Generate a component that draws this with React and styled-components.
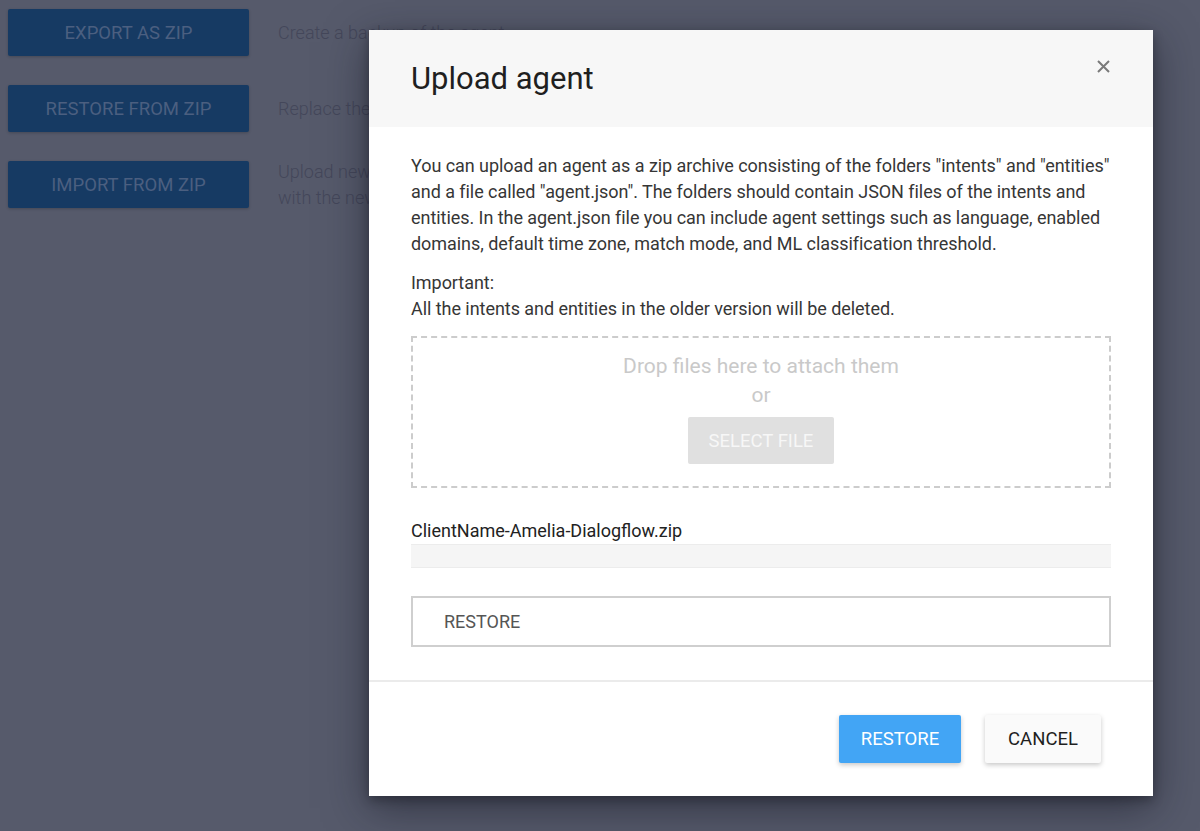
import React from "react";
import styled, { createGlobalStyle } from "styled-components";

const Global = createGlobalStyle`
  html, body { margin: 0; padding: 0; }
  body {
    background: #565a6b;
    font-family: Roboto, "Liberation Sans", sans-serif;
    width: 1200px;
    height: 831px;
    overflow: hidden;
  }
  * { box-sizing: border-box; }
`;

const Page = styled.div`
  padding: 9px 8px;
  display: flex;
  flex-direction: column;
  gap: 29px;
`;

const Row = styled.div`
  display: flex;
  align-items: center;
  gap: 29px;
`;

const BgButton = styled.div`
  width: 241px;
  height: 47px;
  flex: none;
  background: #163a63;
  color: #4b5f80;
  border-radius: 2px;
  box-shadow: 0 1px 3px rgba(0, 0, 0, 0.2);
  display: flex;
  align-items: center;
  justify-content: center;
  font-size: 18.5px;
  text-transform: uppercase;
`;

const BgText = styled.div`
  color: #44475a;
  font-size: 18px;
  font-weight: 300;
  line-height: 26px;
  white-space: nowrap;
  margin: -3px 0;
`;

const Modal = styled.div`
  position: absolute;
  left: 369px;
  top: 30px;
  width: 784px;
  height: 766px;
  background: #fff;
  box-shadow: 0 12px 40px rgba(20, 22, 35, 0.55), 0 4px 10px rgba(0, 0, 0, 0.3);
  display: flex;
  flex-direction: column;
`;

const Header = styled.div`
  position: relative;
  height: 97px;
  background: #f7f7f7;
  padding: 0 42px;
  display: flex;
  align-items: center;
`;

const Title = styled.h2`
  margin: 0;
  font-size: 31px;
  font-weight: 400;
  color: #1f1f1f;
`;

const Close = styled.button`
  position: absolute;
  right: 42px;
  top: 29px;
  width: 15px;
  height: 15px;
  padding: 0;
  border: none;
  background: none;
  display: flex;
  align-items: center;
  justify-content: center;
`;

const Body = styled.div`
  padding: 26px 42px 0;
  display: flex;
  flex-direction: column;
  color: #363636;
  font-size: 18px;
  line-height: 26px;
`;

const Para = styled.p`
  margin: 0 0 ${(p) => p.$mb || 0}px;
  font-weight: 400;
  letter-spacing: -0.05px;
`;

const Drop = styled.div`
  height: 152px;
  border: 2px dashed #cccccc;
  padding-top: 14px;
  display: flex;
  flex-direction: column;
  align-items: center;
  color: #c9c9c9;
  font-size: 21px;
  line-height: 29px;
`;

const SelectFile = styled.button`
  margin-top: 7px;
  width: 146px;
  height: 47px;
  border: none;
  border-radius: 2px;
  background: #e0e0e0;
  color: #f7f7f7;
  font-family: Roboto, sans-serif;
  font-size: 18.5px;
  text-transform: uppercase;
`;

const FileName = styled.div`
  margin-top: 30px;
  color: #222;
`;

const Progress = styled.div`
  height: 24px;
  background: #f5f5f5;
  border-top: 1px solid #ececec;
  border-bottom: 1px solid #ececec;
`;

const RestoreBox = styled.div`
  margin-top: 28px;
  height: 51px;
  border: 2px solid #cfcfcf;
  padding-left: 31px;
  display: flex;
  align-items: center;
  color: #555;
  font-size: 18px;
`;

const Divider = styled.div`
  margin-top: 33px;
  height: 2px;
  background: #ebebeb;
`;

const Footer = styled.div`
  padding: 33px 52px 0;
  display: flex;
  justify-content: flex-end;
  gap: 24px;
`;

const Btn = styled.button`
  height: 48px;
  width: ${(p) => p.$w}px;
  border: none;
  border-radius: 2px;
  font-family: Roboto, sans-serif;
  font-size: 18.5px;
  text-transform: uppercase;
  background: ${(p) => (p.$primary ? "#42a5f5" : "#fafafa")};
  color: ${(p) => (p.$primary ? "#fff" : "#1f1f1f")};
  box-shadow: 0 2px 5px rgba(0, 0, 0, 0.22);
`;

export default function App() {
  return (
    <>
      <Global />
      <Page>
        <Row>
          <BgButton>Export as zip</BgButton>
          <BgText>Create a backup of the agent.</BgText>
        </Row>
        <Row>
          <BgButton>Restore from zip</BgButton>
          <BgText>
            Replace the current version of the agent with a new one. The older version will be overwritten and discarded.
          </BgText>
        </Row>
        <Row>
          <BgButton>Import from zip</BgButton>
          <BgText>
            Upload new intents and entities to the existing agent. Intents and entities with the same name will be replaced
            <br />
            with the newer version.
          </BgText>
        </Row>
      </Page>
      <Modal>
        <Header>
          <Title>Upload agent</Title>
          <Close aria-label="close">
            <svg width="13" height="13" viewBox="0 0 13 13">
              <path d="M1 1L12 12M12 1L1 12" stroke="#7a7a7a" strokeWidth="2" />
            </svg>
          </Close>
        </Header>
        <Body>
          <Para $mb={13}>
            You can upload an agent as a zip archive consisting of the folders "intents" and "entities" and a file called
            "agent.json". The folders should contain JSON files of the intents and entities. In the agent.json file you can
            include agent settings such as language, enabled domains, default time zone, match mode, and ML classification
            threshold.
          </Para>
          <Para $mb={14}>
            Important:
            <br />
            All the intents and entities in the older version will be deleted.
          </Para>
          <Drop>
            <div>Drop files here to attach them</div>
            <div>or</div>
            <SelectFile>Select file</SelectFile>
          </Drop>
          <FileName>ClientName-Amelia-Dialogflow.zip</FileName>
          <Progress />
          <RestoreBox>RESTORE</RestoreBox>
        </Body>
        <Divider />
        <Footer>
          <Btn $primary $w={122}>Restore</Btn>
          <Btn $w={116}>Cancel</Btn>
        </Footer>
      </Modal>
    </>
  );
}
